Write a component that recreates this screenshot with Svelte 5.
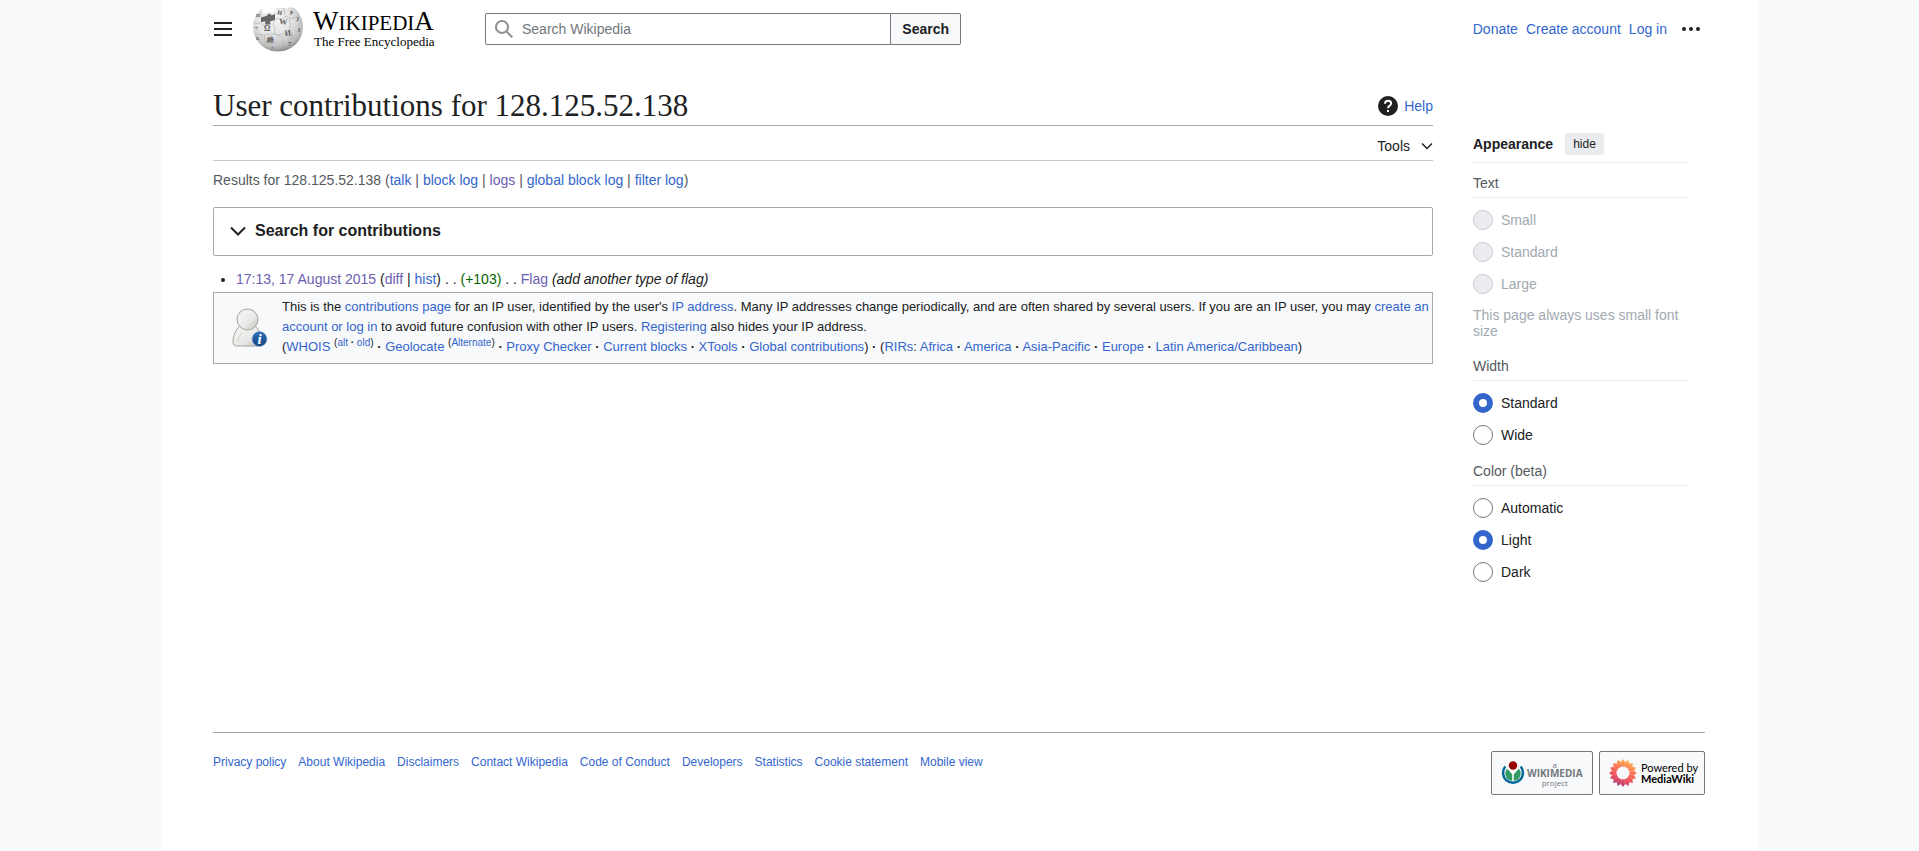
<script>
  let textSize = $state('');
  let width = $state('standard');
  let color = $state('light');

  const groups = [
    { id: 'text', title: 'Text', disabled: true, options: ['Small', 'Standard', 'Large'] },
    { id: 'width', title: 'Width', options: ['Standard', 'Wide'] },
    { id: 'color', title: 'Color (beta)', options: ['Automatic', 'Light', 'Dark'] }
  ];
  const selected = $derived({ text: textSize, width, color });

  function choose(id, value) {
    if (id === 'width') width = value;
    else if (id === 'color') color = value;
    else textSize = value;
  }

  const footerLinks = [
    'Privacy policy', 'About Wikipedia', 'Disclaimers', 'Contact Wikipedia', 'Code of Conduct',
    'Developers', 'Statistics', 'Cookie statement', 'Mobile view'
  ];
  const petals = Array.from({ length: 16 }, (_, i) => i * 22.5);
</script>

<div class="page">
  <header>
    <button class="icon-button menu" aria-label="Main menu">
      <svg width="20" height="20" viewBox="0 0 20 20"><path d="M1 3v2h18V3zm0 8h18V9H1zm0 6h18v-2H1z" /></svg>
    </button>
    <a class="logo" href="#main" aria-label="Wikipedia, The Free Encyclopedia">
      <svg class="globe" width="50" height="46" viewBox="0 0 50 46">
        <defs>
          <radialGradient id="ball" cx="42%" cy="30%" r="72%">
            <stop offset="0" stop-color="#f6f6f6" />
            <stop offset=".5" stop-color="#e2e2e2" />
            <stop offset=".82" stop-color="#bcbcbc" />
            <stop offset="1" stop-color="#858585" />
          </radialGradient>
        </defs>
        <path fill="url(#ball)" d="M9 2.500C3 7 0 13.500 0 20.500 0 34.500 11 45.500 25 45.500S50 34.500 50 20.500C50 13 46.500 6.500 41.500 2.200l-4-.9c-2 .2-2.300 1.500-4.500 1.300L28 1.500l-4.500.3-1 4-3.500.7-2.500-1L12 8 9.500 7z" />
        <path fill="#666" d="M8 11.500l6-1.800 1-1.700 3 .2.500 1.300 3.500-1.500v6l-5 1.500.5 3h-5.500l.5-3L8 16z" />
        <path fill="none" stroke="#b0b0b0" stroke-width=".7" d="M1 17c5 1 7-1 8 1s3 3 5 2M7 6c1 3-1 4 1 5M22 13c5-1 6 1 8-1s5-1 7 0 6 0 9-3M22 13c0 4-3 4-1 7s0 5 1 8 5 1 7 3 0 6 2 9M37 12c-2 4 2 5 0 9s3 5 2 9 4 3 8 2M3 29c4-2 5 1 8 0s8-1 11-1M12 29c-2 4 2 5 1 8s1 4 3 6M22 28c5 2 6-1 9 0s5 1 8 2M31 2c-1 3 2 4 0 7M39 30c-3 4 0 6-2 12" />
        <g fill="#5a5a5a" font-family="Liberation Serif, serif" font-weight="bold">
          <text x="11" y="25" font-size="8">Ω</text>
          <text x="26" y="18" font-size="8" transform="rotate(5 26 18)">W</text>
          <text x="32" y="30" font-size="8" transform="rotate(-8 32 30)">И</text>
          <text x="14" y="36" font-size="7">維</text>
          <text x="35" y="40" font-size="6">7</text>
          <text x="24" y="8" font-size="6" transform="rotate(15 24 8)">И</text>
          <text x="37" y="7" font-size="6">و</text>
          <text x="3" y="11" font-size="5">Й</text>
          <text x="2" y="24" font-size="6">ר</text>
          <text x="43" y="15" font-size="6">J</text>
          <text x="45" y="26" font-size="6">I</text>
          <text x="3" y="34" font-size="5">Б</text>
          <text x="18" y="44" font-size="4">ᚠ</text>
        </g>
      </svg>
      <span class="brand">
        <span class="wordmark"><b>W</b>IKIPEDI<b>A</b></span>
        <span class="tagline">The Free Encyclopedia</span>
      </span>
    </a>
    <form class="search" onsubmit={(e) => e.preventDefault()}>
      <label class="field">
        <svg width="20" height="20" viewBox="0 0 20 20"><path fill="#919191" d="M12.200 13.600a7 7 0 1 1 1.400-1.400l5.400 5.400-1.400 1.400zM3 8a5 5 0 1 0 10 0A5 5 0 0 0 3 8" /></svg>
        <input type="search" placeholder="Search Wikipedia" aria-label="Search Wikipedia" />
      </label>
      <button>Search</button>
    </form>
    <nav class="account">
      <a href="#donate">Donate</a>
      <a href="#create">Create account</a>
      <a href="#login">Log in</a>
      <button class="icon-button" aria-label="Personal tools">
        <svg width="20" height="20" viewBox="0 0 20 20"><circle cx="3" cy="10" r="2" /><circle cx="10" cy="10" r="2" /><circle cx="17" cy="10" r="2" /></svg>
      </button>
    </nav>
  </header>

  <div class="columns">
    <main id="main">
      <div class="title-row">
        <h1>User contributions for 128.125.52.138</h1>
        <a class="help" href="#help">
          <svg width="20" height="20" viewBox="0 0 20 20">
            <circle cx="10" cy="10" r="10" fill="#202122" />
            <path d="M7 7.800c0-2 1.300-3 3.100-3s3 1.100 3 2.700c0 2.200-3.100 2.300-3.100 4.700" fill="none" stroke="#fff" stroke-width="2" />
            <path d="M9 14h2v2H9z" fill="#fff" />
          </svg>
          Help
        </a>
      </div>
      <div class="toolbar">
        <button>Tools
          <svg width="12" height="12" viewBox="0 0 12 12"><path d="M1 3.500L6 8.500l5-5" fill="none" stroke="#202122" stroke-width="1.500" /></svg>
        </button>
      </div>
      <p class="results">Results for 128.125.52.138 (<a href="#talk">talk</a> | <a href="#block">block log</a> | <a class="visited" href="#logs">logs</a> | <a href="#global">global block log</a> | <a href="#filter">filter log</a>)</p>

      <button class="filter">
        <svg width="16" height="16" viewBox="0 0 16 16"><path d="M1 4.500L8 11.500l7-7" fill="none" stroke="#202122" stroke-width="2" /></svg>
        Search for contributions
      </button>

      <ul>
        <li><a class="visited" href="#rev">17:13, 17 August 2015</a> (<a class="visited" href="#diff">diff</a> | <a href="#hist">hist</a>) . . <span class="plus">(+103)</span> . . <a class="visited" href="#flag">Flag</a> <i>(add another type of flag)</i></li>
      </ul>

      <section class="notice">
        <svg width="36" height="40" viewBox="0 0 36 40">
          <defs>
            <linearGradient id="body" x1="0" y1="0" x2="1" y2="1">
              <stop offset="0" stop-color="#f7f7f5" /><stop offset=".6" stop-color="#e8e8e6" /><stop offset="1" stop-color="#bdbdb9" />
            </linearGradient>
            <linearGradient id="badge" x1="0" y1="0" x2="0" y2="1">
              <stop offset="0" stop-color="#2f6cb5" /><stop offset="1" stop-color="#164484" />
            </linearGradient>
          </defs>
          <path d="M7.500 18.500C3.500 22 1 28.500 1 34c0 3 1.500 4 4 4h23c1.500 0 2-1 2-3 0-6-2-12.500-6.500-16.500z" fill="url(#body)" stroke="#a3a39f" />
          <path d="M6 34c0-4 2-7 4-9" fill="none" stroke="#cfcfcb" />
          <circle cx="15.500" cy="11.500" r="10.500" fill="url(#body)" stroke="#a3a39f" />
          <circle cx="27.500" cy="31" r="7.500" fill="url(#badge)" stroke="#9db8dc" stroke-width=".6" />
          <text x="27.500" y="36" text-anchor="middle" fill="#fff" font-family="Liberation Serif, serif" font-style="italic" font-weight="bold" font-size="15">i</text>
        </svg>
        <div>
          <p>This is the <a href="#c">contributions page</a> for an IP user, identified by the user's <a href="#ip">IP address</a>. Many IP addresses change periodically, and are often shared by several users. If you are an IP user, you may <a href="#cr">create an account or log in</a> to avoid future confusion with other IP users. <a href="#reg">Registering</a> also hides your IP address.</p>
          <p>(<a href="#w">WHOIS</a> <sup>(<a href="#alt">alt</a> <b>·</b> <a href="#old">old</a>)</sup> <b>·</b> <a href="#g">Geolocate</a> <sup>(<a href="#al">Alternate</a>)</sup> <b>·</b> <a href="#p">Proxy Checker</a> <b>·</b> <a href="#cb">Current blocks</a> <b>·</b> <a href="#x">XTools</a> <b>·</b> <a href="#gc">Global contributions</a>) <b>·</b> (<a href="#rir">RIRs</a>: <a href="#af">Africa</a> <b>·</b> <a href="#am">America</a> <b>·</b> <a href="#as">Asia-Pacific</a> <b>·</b> <a href="#eu">Europe</a> <b>·</b> <a href="#la">Latin America/Caribbean</a>)</p>
        </div>
      </section>
    </main>

    <aside>
      <div class="panel-head"><strong>Appearance</strong><button>hide</button></div>
      {#each groups as group}
        <fieldset class:disabled={group.disabled} disabled={group.disabled}>
          <legend>{group.title}</legend>
          {#each group.options as option}
            <label>
              <input
                type="radio"
                name={group.id}
                value={option.toLowerCase()}
                checked={selected[group.id] === option.toLowerCase()}
                onchange={() => choose(group.id, option.toLowerCase())}
              />
              {option}
            </label>
          {/each}
          {#if group.disabled}<p>This page always uses small font size</p>{/if}
        </fieldset>
      {/each}
    </aside>
  </div>

  <footer>
    <nav>
      {#each footerLinks as link}<a href="#footer">{link}</a>{/each}
    </nav>
    <div class="badges">
      <a class="wikimedia" href="#wikimedia">
        <svg width="24" height="24" viewBox="0 0 24 24">
          <path d="M4.200 5.500a10 10 0 1 0 15.600 0" fill="none" stroke="#069" stroke-width="2.500" />
          <path d="M6.200 7.800a7.200 7.200 0 0 0 5 12V13.200z" fill="#396" />
          <path d="M17.800 7.800a7.200 7.200 0 0 1-5 12V13.200z" fill="#396" />
          <circle cx="12" cy="4.500" r="4.200" fill="#900" />
        </svg>
        <span><small>a</small><b>WIKIMEDIA</b><small>project</small></span>
      </a>
      <a class="mediawiki" href="#mediawiki">
        <svg width="28" height="28" viewBox="-14 -14 28 28">
          <defs>
            <linearGradient id="flower" gradientUnits="userSpaceOnUse" x1="-6" y1="13" x2="5" y2="-13">
              <stop offset="0" stop-color="#a53a7c" /><stop offset=".3" stop-color="#ee4b5b" /><stop offset=".65" stop-color="#fb7657" /><stop offset="1" stop-color="#ffb84d" />
            </linearGradient>
            <mask id="petals">
              <g fill="#fff">
                {#each petals as angle}<path d="M-2.400 -8L-2.200 -11L0 -14L2.200 -11L2.400 -8z" transform="rotate({angle})" />{/each}
                <circle r="11" />
              </g>
              <circle r="6.500" fill="#000" />
            </mask>
          </defs>
          <rect x="-14" y="-14" width="28" height="28" fill="url(#flower)" mask="url(#petals)" />
          <g stroke="#fff" stroke-opacity=".25" stroke-width=".7">
            {#each petals as angle}<path d="M0 -7V-11" transform="rotate({angle + 11})" />{/each}
          </g>
        </svg>
        <span>Powered by<b>MediaWiki</b></span>
      </a>
    </div>
  </footer>
</div>

<style>
  :global(body) {
    margin: 0;
    background: #f8f9fa;
    color: #202122;
    font: 14px/22px Arial, "Liberation Sans", sans-serif;
  }
  a { color: #3366cc; text-decoration: none; }
  a:hover { text-decoration: underline; }
  a.visited { color: #6a60b0; }
  button { font: inherit; color: inherit; cursor: pointer; }
  svg { display: block; flex: none; }
  p { margin: 0; }

  .page {
    box-sizing: border-box;
    display: flex;
    flex-direction: column;
    max-width: 1597px;
    min-height: 100vh;
    margin: 0 auto;
    padding: 0 53px 0 52px;
    background: #fff;
  }

  header { display: flex; align-items: center; height: 58px; }
  .icon-button { padding: 0; border: 0; background: none; fill: #202122; }
  .logo { display: flex; align-items: center; gap: 10px; width: 232px; margin-left: 20px; color: #000; }
  .logo:hover { text-decoration: none; }
  .brand { display: flex; flex-direction: column; font-family: "Liberation Serif", serif; white-space: nowrap; }
  .wordmark { font-size: 21px; line-height: 22px; }
  .wordmark b { font-size: 27px; font-weight: 400; }
  .tagline { padding-left: 1px; font-size: 13px; line-height: 15px; }
  .search { display: flex; flex: 0 1 476px; height: 32px; }
  .field {
    display: flex;
    flex: 1;
    align-items: center;
    gap: 8px;
    min-width: 0;
    padding-left: 8px;
    border: 1px solid #72777d;
    border-radius: 2px 0 0 2px;
  }
  .field input { flex: 1; min-width: 0; padding: 0; border: 0; outline: 0; background: none; font: inherit; }
  .field input::placeholder { color: #72777d; opacity: 1; }
  .search button {
    padding: 0 11px;
    border: 1px solid #72777d;
    border-left: 0;
    border-radius: 0 2px 2px 0;
    background: #f8f9fa;
    font-weight: 700;
  }
  .account { display: flex; align-items: center; gap: 8px; margin-left: auto; white-space: nowrap; }
  .account button { margin: 0 4px 0 6px; }

  .columns { display: grid; grid-template-columns: minmax(0, 1fr) 232px; gap: 40px; }
  main { padding-top: 28px; }
  .title-row { display: flex; align-items: center; justify-content: space-between; padding-top: 1px; border-bottom: 1px solid #a2a9b1; }
  h1 { margin: 0; font: 400 31px/38px Georgia, "Liberation Serif", serif; }
  .help { display: flex; align-items: center; gap: 6px; }
  .toolbar { display: flex; justify-content: flex-end; height: 34px; border-bottom: 1px solid #c8ccd1; }
  .toolbar button { display: flex; align-items: center; gap: 11px; padding: 6px 0 0; border: 0; background: none; }
  .results { margin: 8px 0 16px; color: #54595d; }
  .filter {
    display: flex;
    align-items: center;
    gap: 9px;
    width: 100%;
    height: 49px;
    padding: 0 16px 2px;
    border: 1px solid #a2a9b1;
    border-radius: 2px;
    background: #fff;
    font-size: 16px;
    font-weight: 700;
  }
  ul { margin: 12px 0 2px; padding-left: 23px; }
  .plus { color: #006400; }
  .notice {
    display: flex;
    gap: 14px;
    padding: 4px 0 6px 18px;
    border: 1px solid #a2a9b1;
    background: #f8f9fa;
    font-size: 13px;
    line-height: 20px;
  }
  .notice svg { margin-top: 11px; }
  sup { font-size: 10px; line-height: 1; }

  aside { padding-top: 75px; }
  .panel-head { display: flex; align-items: center; gap: 12px; margin-right: 16px; padding-bottom: 7px; border-bottom: 1px solid #eaecf0; }
  .panel-head button { height: 22px; padding: 0 8px; border: 0; border-radius: 2px; background: #eaecf0; font-size: 12px; line-height: 22px; }
  fieldset { margin: 0 16px 0 0; padding: 0; border: 0; }
  legend { box-sizing: border-box; width: 100%; margin-bottom: 6px; padding: 9px 0 3px; border-bottom: 1px solid #eaecf0; color: #54595d; }
  aside label { display: flex; align-items: center; gap: 8px; height: 32px; }
  input[type="radio"] { appearance: none; box-sizing: border-box; flex: none; width: 20px; height: 20px; margin: 0; border: 1px solid #72777d; border-radius: 50%; background: #fff; }
  input[type="radio"]:checked { border: 6px solid #3366cc; }
  .disabled { color: #a2a9b1; }
  .disabled input[type="radio"] { border-color: #c8ccd1; background: #eaecf0; }
  .disabled p { padding: 7px 0; line-height: 16px; }

  footer { display: flex; justify-content: space-between; margin-top: auto; padding: 18px 0 56px; border-top: 1px solid #a2a9b1; font-size: 12px; }
  footer nav { display: flex; flex-wrap: wrap; gap: 12px; }
  .badges { display: flex; gap: 6px; }
  .badges a {
    box-sizing: border-box;
    display: flex;
    align-items: center;
    gap: 2px;
    width: 102px;
    height: 44px;
    padding-left: 9px;
    border: 1px solid #72777d;
    border-radius: 2px;
    background: #f8f9fa;
  }
  .badges span { display: flex; flex-direction: column; white-space: nowrap; }
  .badges .wikimedia span { align-items: center; color: #72777d; font: 10px/9px "Open Sans", sans-serif; }
  .wikimedia small { font-size: 8px; }
  .badges .mediawiki { width: 106px; gap: 4px; color: #000; }
  .mediawiki span { font: 11px/11px Lato, sans-serif; }
</style>
